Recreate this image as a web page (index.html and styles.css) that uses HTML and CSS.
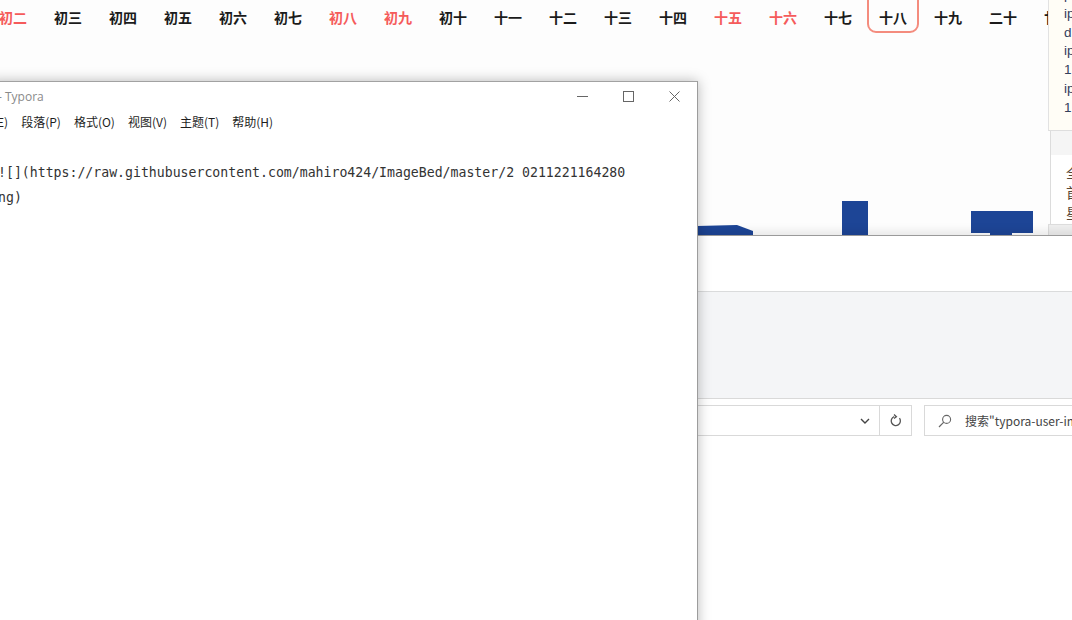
FILE: index.html
```html
<!DOCTYPE html>
<html lang="zh-CN">
<head>
<meta charset="utf-8">
<title>Typora</title>
<link rel="stylesheet" href="styles.css">
</head>
<body>
<div class="desktop">
  <div class="calendar">
    <div class="day red">初二</div>
    <div class="day">初三</div>
    <div class="day">初四</div>
    <div class="day">初五</div>
    <div class="day">初六</div>
    <div class="day">初七</div>
    <div class="day red">初八</div>
    <div class="day red">初九</div>
    <div class="day">初十</div>
    <div class="day">十一</div>
    <div class="day">十二</div>
    <div class="day">十三</div>
    <div class="day">十四</div>
    <div class="day red">十五</div>
    <div class="day red">十六</div>
    <div class="day">十七</div>
    <div class="day selected">十八</div>
    <div class="day">十九</div>
    <div class="day">二十</div>
    <div class="day">廿一</div>
  </div>

  <svg class="blue-art" width="350" height="40" viewBox="0 0 350 40">
    <polygon points="0,31 40,30 56,36 56,40 0,40" fill="#1d4596"/>
    <rect x="145" y="6" width="26" height="34" fill="#1d4596"/>
    <rect x="274" y="16" width="62" height="22" fill="#1d4596"/>
    <rect x="293" y="37" width="22" height="3" fill="#1d4596"/>
  </svg>

  <div class="side-top">
    <div class="side-line">p</div>
    <div class="side-line">ip</div>
    <div class="side-line">d</div>
    <div class="side-line">ip</div>
    <div class="side-line">1</div>
    <div class="side-line">ip</div>
    <div class="side-line">1</div>
  </div>
  <div class="side-bottom">
    <div class="side-head"></div>
    <div class="side-text">
      <div>全</div>
      <div>首</div>
      <div>星</div>
    </div>
  </div>
  <div class="side-foot"></div>

  <div class="explorer">
    <div class="ex-tabs"></div>
    <div class="ex-ribbon"></div>
    <div class="ex-nav">
      <div class="ex-address">
        <svg class="chev" width="10" height="6" viewBox="0 0 10 6"><polyline points="1,1 5,5 9,1" fill="none" stroke="#444" stroke-width="1.4"/></svg>
      </div>
      <div class="ex-refresh">
        <svg width="14" height="14" viewBox="0 0 14 14"><path d="M10.5 4.2 A4.6 4.6 0 1 1 5.2 2.6" fill="none" stroke="#555" stroke-width="1.3"/><polyline points="5,0.6 7.4,2.7 5,4.6" fill="none" stroke="#555" stroke-width="1.3"/></svg>
      </div>
      <div class="ex-search">
        <svg class="mag" width="14" height="14" viewBox="0 0 14 14"><circle cx="8.6" cy="5.4" r="4" fill="none" stroke="#666" stroke-width="1.1"/><line x1="5.8" y1="8.2" x2="1" y2="13" stroke="#666" stroke-width="1.2"/></svg>
        <span class="search-text">搜索"typora-user-images"</span>
      </div>
    </div>
  </div>

  <div class="typora">
    <div class="tp-title">
      <span class="tp-name">- Typora</span>
      <div class="tp-controls">
        <div class="tp-btn"><span class="ic-min"></span></div>
        <div class="tp-btn"><span class="ic-max"></span></div>
        <div class="tp-btn">
          <svg width="11" height="11" viewBox="0 0 11 11"><line x1="0.5" y1="0.5" x2="10.5" y2="10.5" stroke="#666" stroke-width="1"/><line x1="10.5" y1="0.5" x2="0.5" y2="10.5" stroke="#666" stroke-width="1"/></svg>
        </div>
      </div>
    </div>
    <div class="tp-menu">
      <span class="menu-item first">编辑(E)</span>
      <span class="menu-item">段落(P)</span>
      <span class="menu-item">格式(O)</span>
      <span class="menu-item">视图(V)</span>
      <span class="menu-item">主题(T)</span>
      <span class="menu-item">帮助(H)</span>
    </div>
    <div class="tp-content">
      <div class="code-line">![](https://raw.githubusercontent.com/mahiro424/ImageBed/master/2 0211221164280</div>
      <div class="code-line">ng)</div>
    </div>
  </div>
</div>
</body>
</html>
```

FILE: styles.css
```css
* { box-sizing: border-box; }
html, body {
  margin: 0;
  padding: 0;
  width: 1072px;
  height: 620px;
  overflow: hidden;
  background: #fdfdfd;
}
.desktop {
  position: relative;
  width: 1072px;
  height: 620px;
  overflow: hidden;
  font-family: "Noto Sans CJK SC", sans-serif;
}

/* calendar row */
.calendar {
  display: flex;
  gap: 3px;
  margin-left: -13px;
  margin-top: -9px;
}
.day {
  flex: 0 0 52px;
  height: 42px;
  padding-top: 14px;
  line-height: 20px;
  text-align: center;
  font-size: 14px;
  font-weight: bold;
  color: #1b1b1b;
  border: 2px solid transparent;
  border-radius: 9px;
}
.day.red { color: #f55b5b; }
.day.selected { border-color: #f48c7e; }

/* blue fragments behind explorer */
.blue-art {
  position: absolute;
  left: 697px;
  top: 195px;
}

/* right side panels */
.side-top {
  position: absolute;
  left: 1048px;
  top: 0;
  width: 40px;
  height: 131px;
  background: #fffdf6;
  border-left: 1px solid #e2e2e2;
  border-bottom: 1px solid #dedede;
  padding-left: 15px;
  font-family: "Liberation Sans", sans-serif;
  font-size: 13.5px;
  color: #34405c;
  overflow: hidden;
}
.side-line {
  height: 18.8px;
  line-height: 18.8px;
  white-space: nowrap;
}
.side-line:first-child { margin-top: -14px; }
.side-bottom {
  position: absolute;
  left: 1050px;
  top: 131px;
  width: 40px;
  height: 94px;
  background: #ffffff;
  border-left: 1px solid #dcdcdc;
  overflow: hidden;
}
.side-head {
  height: 24px;
  background: #f5f5f5;
}
.side-text {
  padding-left: 15px;
  padding-top: 7px;
  font-size: 14px;
  line-height: 20px;
  color: #5a4636;
}
.side-foot {
  position: absolute;
  left: 1048px;
  top: 224px;
  width: 40px;
  height: 12px;
  background: #efefef;
  border: 1px solid #dddddd;
}

/* explorer window */
.explorer {
  position: absolute;
  left: 697px;
  top: 235px;
  width: 400px;
  height: 400px;
  background: #ffffff;
  border-top: 1px solid #9a9a9a;
  box-shadow: 0 -3px 10px rgba(0,0,0,0.10);
  overflow: hidden;
}
.ex-tabs {
  height: 56px;
  border-bottom: 1px solid #dadbdc;
}
.ex-ribbon {
  height: 107px;
  background: #f4f5f7;
  border-bottom: 1px solid #d9d9d9;
}
.ex-nav {
  display: flex;
  margin-top: 6px;
  height: 31px;
  margin-left: -10px;
}
.ex-address {
  flex: 0 0 193px;
  height: 31px;
  border: 1px solid #d9d9d9;
  display: flex;
  align-items: center;
  justify-content: flex-end;
  padding-right: 9px;
}
.ex-refresh {
  flex: 0 0 32px;
  height: 31px;
  border: 1px solid #d9d9d9;
  border-left: none;
  display: flex;
  align-items: center;
  justify-content: center;
}
.ex-search {
  flex: 0 0 200px;
  margin-left: 12px;
  height: 31px;
  border: 1px solid #d9d9d9;
  display: flex;
  align-items: center;
  padding-left: 13px;
  white-space: nowrap;
  overflow: hidden;
}
.mag { flex: 0 0 auto; }
.search-text {
  margin-left: 13px;
  font-family: "Noto Sans CJK SC", sans-serif;
  font-size: 12px;
  color: #444;
}

/* typora window */
.typora {
  position: absolute;
  left: -10px;
  top: 81px;
  width: 708px;
  height: 560px;
  background: #ffffff;
  border-top: 1px solid #a2a2a2;
  border-right: 1px solid #9c9c9c;
  box-shadow: 0 0 12px rgba(0,0,0,0.28);
  z-index: 5;
}
.tp-title {
  display: flex;
  align-items: center;
  height: 29px;
}
.tp-name {
  padding-left: 8px;
  font-family: "Open Sans", sans-serif;
  font-size: 12px;
  color: #8a8a8a;
}
.tp-controls {
  margin-left: auto;
  display: flex;
  height: 29px;
}
.tp-btn {
  width: 46px;
  height: 29px;
  display: flex;
  align-items: center;
  justify-content: center;
}
.ic-min {
  width: 11px;
  height: 1px;
  background: #666;
}
.ic-max {
  width: 11px;
  height: 11px;
  border: 1px solid #666;
}
.tp-menu {
  display: flex;
  gap: 13px;
  height: 20px;
  align-items: center;
  font-size: 12px;
  color: #1e1e1e;
  white-space: nowrap;
}
.menu-item.first { margin-left: -21px; }
.tp-content {
  padding-top: 29px;
  padding-left: 8px;
  font-family: "DejaVu Sans Mono", monospace;
  font-size: 13.2px;
  color: #333;
}
.code-line {
  height: 25px;
  line-height: 25px;
  white-space: pre;
}
```
